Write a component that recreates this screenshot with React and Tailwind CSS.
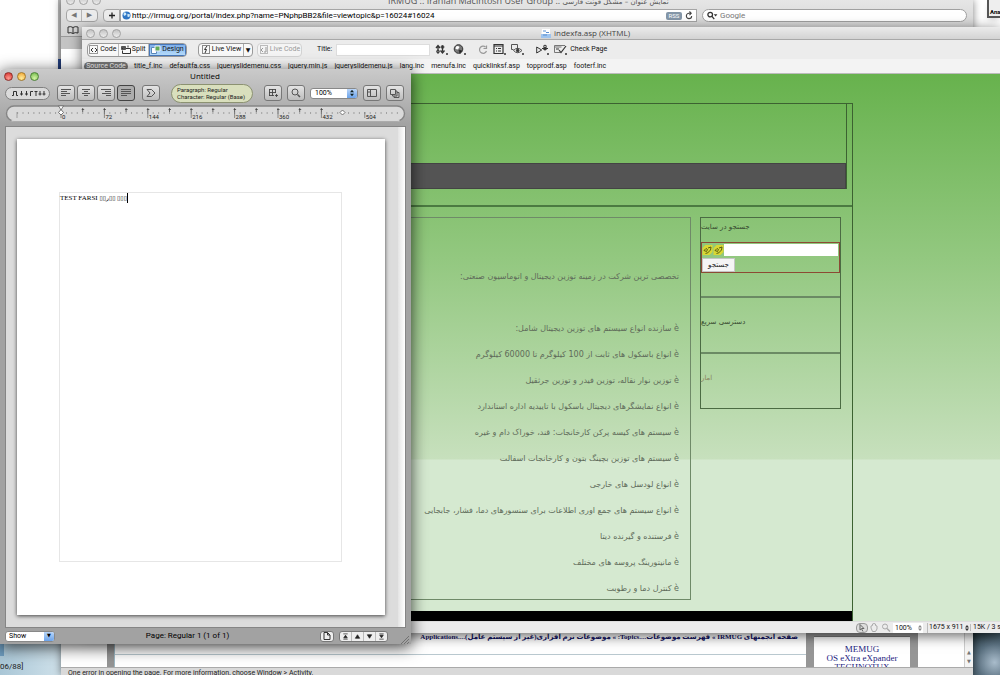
import React from "react";

const LATIN = "font-['Roboto','Noto_Sans','DejaVu_Sans',sans-serif]";

const relatedFiles = [
  "title_f.inc",
  "defaultfa.css",
  "jqueryslidemenu.css",
  "jquery.min.js",
  "jqueryslidemenu.js",
  "lang.inc",
  "menufa.inc",
  "quicklinksf.asp",
  "topprodf.asp",
  "footerf.inc",
];

const products = [
  "سازنده انواع سیستم های توزین دیجیتال شامل:",
  "انواع باسکول های ثابت از 100 کیلوگرم تا 60000 کیلوگرم",
  "توزین نوار نقاله، توزین فیدر و توزین جرثقیل",
  "انواع نمایشگرهای دیجیتال باسکول با تاییدیه اداره استاندارد",
  "سیستم های کیسه پرکن کارخانجات: قند، خوراک دام و غیره",
  "سیستم های توزین بچینگ بتون و کارخانجات اسفالت",
  "انواع لودسل های خارجی",
  "انواع سیستم های جمع اوری اطلاعات برای سنسورهای دما، فشار، جابجایی",
  "فرستنده و گیرنده دیتا",
  "مانیتورینگ پروسه های مختلف",
  "کنترل دما و رطوبت",
];

/* ---------- shared bits ---------- */

function GreyLights() {
  return (
    <div className="flex gap-1">
      {[0, 1, 2].map((i) => (
        <span
          key={i}
          className="h-[9px] w-[9px] rounded-full border border-[#a2a2a2] bg-gradient-to-b from-[#c4c4c4] to-[#ececec]"
        />
      ))}
    </div>
  );
}

function Icon({ className = "h-[10px] w-[12px]", children, viewBox = "0 0 12 10" }) {
  return (
    <svg viewBox={viewBox} className={`shrink-0 ${className}`} fill="none" stroke="#333" strokeWidth="1" aria-hidden="true">
      {children}
    </svg>
  );
}

/* ---------- browser window at the back ---------- */

function BrowserWindow() {
  return (
    <section className="absolute top-0 bottom-0 left-[61px] right-[27px] flex flex-col overflow-hidden bg-white shadow-[0_0_8px_rgba(0,0,0,0.5)]">
      <header className="bg-gradient-to-b from-[#e6e6e6] to-[#c9c9c9]">
        <div className="flex h-2 items-end px-[5px]">
          <div className="-mb-px -translate-y-1">
            <GreyLights />
          </div>
          <h2 dir="ltr" className="ml-[287px] whitespace-nowrap font-['Open_Sans',sans-serif] text-[9px] leading-[12px] text-[#555]">
            IRMUG :: Iranian Macintosh User Group ::{" "}
            <span dir="rtl" className="font-['DejaVu_Sans',sans-serif] text-[7px]">نمایش عنوان – مشکل فونت فارسی</span>
          </h2>
        </div>
        <div className="flex h-[15px] items-center pl-[5px] pr-[6px]">
          <div className="flex h-[13px] rounded-sm border border-[#a5a5a5] bg-[#ececec]">
            <button aria-label="Back" className="flex w-[15px] items-center justify-center border-r border-[#b5b5b5] text-[7px] text-[#777]">◀</button>
            <button aria-label="Forward" className="flex w-[15px] items-center justify-center text-[7px] text-[#777]">▶</button>
          </div>
          <button aria-label="Add bookmark" className="ml-[5px] h-[13px] w-[17px] rounded-l-sm border border-[#a5a5a5] bg-[#ececec]">
            <svg viewBox="0 0 15 11" className="h-[11px] w-[15px]" stroke="#222" strokeWidth="1.3" aria-hidden="true">
              <path d="M5 5.5h6M8 2.5v6" />
            </svg>
          </button>
          <div className="flex h-[13px] flex-1 items-center border border-[#a5a5a5] bg-white pl-px pr-[3px]">
            <svg viewBox="0 0 10 10" className="h-[9px] w-[9px]" aria-hidden="true">
              <circle cx="5" cy="5" r="4.5" fill="#2f76c6" />
              <path d="M2 1.500q3 0 3 2l-2 2q-2-1-1-4M6 3l3 1-1 3-2-1z" fill="#cfeafa" />
            </svg>
            <input
              aria-label="Address"
              className="min-w-0 flex-1 bg-transparent pl-px text-[8px] text-black outline-none"
              defaultValue="http://irmug.org/portal/index.php?name=PNphpBB2&file=viewtopic&p=16024#16024"
            />
            <button className="h-2 w-4 rounded-[2px] bg-[#8496a8] text-[6px] leading-[8px] text-white">RSS</button>
            <button aria-label="Reload" className="ml-[3px]">
              <svg viewBox="0 0 9 10" className="h-[9px] w-2" fill="none" stroke="#444" strokeWidth="1.2" aria-hidden="true">
                <path d="M7.5 5.5a3 3 0 1 1-3-3h2M5 .5l2 2-2 2" />
              </svg>
            </button>
          </div>
          <div className="ml-[5px] flex h-[13px] w-[265px] items-center rounded-full border border-[#a0a0a0] bg-white pl-[3px]">
            <Icon className="h-[9px] w-[12px]">
              <circle cx="4" cy="4" r="2.6" strokeWidth="1.4" />
              <path d="M6 6l2.5 3" strokeWidth="1.5" />
              <path d="M8 3.5h4l-2 2.5z" fill="#333" stroke="none" />
            </Icon>
            <input aria-label="Google search" placeholder="Google" className="min-w-0 flex-1 bg-transparent pl-[2px] text-[8px] outline-none placeholder:text-[#777]" />
          </div>
        </div>
        <div className="flex h-[14px] items-center border-b border-[#999] pl-[6px]">
          <Icon viewBox="0 0 12 8" className="h-2 w-3">
            <path d="M6 1.5Q4 0 1 1v6q3-1 5 .5Q8 6 11 7V1Q8 0 6 1.5v6" />
          </Icon>
          <Icon viewBox="0 0 10 8" className="ml-[7px] h-2 w-[10px]">
            <path d="M0 1.500h10M0 4h10M0 6.500h10" strokeDasharray="2 1" />
          </Icon>
        </div>
        <div className="h-3 bg-[#c4c4c4]" />
      </header>

      <div className="flex-1" />

      <main className="flex h-[44px] overflow-hidden">
        <div className="ml-[46px] w-[8px] shrink-0 border-r border-[#9db8c4] bg-[#949494]" />
        <div className="min-w-0 flex-1">
          <div dir="rtl" className="h-8 border-b border-[#b9c8cf] pr-[8px] pt-[5px]">
            <p className="whitespace-nowrap font-['Liberation_Serif','DejaVu_Sans',serif] text-[7px] font-bold leading-[18px] text-[#101060]">
              <a href="#index">صفحه انجمنهای IRMUG</a> »{" "}
              <a href="#topics">فهرست موضوعات....Topics:</a> »{" "}
              <a href="#apps">موضوعات نرم افزاری(غیر از سیستم عامل)....Applications</a>
            </p>
          </div>
        </div>
        <aside className="w-[112px] shrink-0 border-x-[8px] border-[#969696] bg-white text-center font-['Liberation_Serif',serif] text-[9px] leading-[9px] text-[#1c1c80]">
          <div className="h-[14px] border-b border-[#777] bg-[#969696]" />
          <div className="flex flex-col pt-[8px]">
            <a href="#memug">MEMUG</a>
            <a href="#osx">OS eXtra eXpander</a>
            <a href="#technotux">TECHNOTUX</a>
          </div>
        </aside>
        <div className="w-[46px] shrink-0" />
        <div className="flex w-[9px] shrink-0 flex-col items-center justify-end gap-[3px] border-l border-[#ccc] bg-[#f4f4f4] pb-[3px] text-[5px] leading-[6px] text-[#777]">
          <span>▲</span>
          <span>▼</span>
        </div>
      </main>
      <footer className="h-2 overflow-hidden border-t border-[#aaa] bg-[#d9d9d9] pl-[7px] text-[7px] leading-[10px] text-[#222]">
        One error in opening the page. For more information, choose Window &gt; Activity.
      </footer>
    </section>
  );
}

/* ---------- page editor window ---------- */

function EditorToolbar() {
  return (
    <div className="flex h-[19px] items-center bg-[#ececec] pl-[5px] text-[7px] text-[#111]">
      <div className="flex h-[14px] w-[100px] overflow-hidden rounded-[4px] border border-[#999] bg-[#f8f8f8]">
        <button className="flex flex-1 items-center justify-center gap-px border-r border-[#bbb]">
          <Icon className="h-[9px] w-[10px]" viewBox="0 0 10 9"><rect x=".5" y=".5" width="8" height="8" stroke="#999" /><path d="M4 3L2 5l2 2M6 3l2 2-2 2" /></Icon>
          Code
        </button>
        <button className="flex flex-1 items-center justify-center gap-px border-r border-[#bbb]">
          <Icon className="h-[9px] w-[10px]" viewBox="0 0 10 9"><path d="M.5 1.500h4v3h-4z" fill="#555" stroke="#555" /><path d="M5 3.500h4.500v5H1.500v-3M7 .5v2M2 3L1 4" /></Icon>
          Split
        </button>
        <button className="flex w-[37px] items-center justify-center gap-px border border-[#4777b9] bg-gradient-to-b from-[#7fb0ea] to-[#b6dcfb]">
          <Icon className="h-[9px] w-[10px]" viewBox="0 0 10 9"><path d="M.5 2.500h5v6h-5z" fill="#fff" stroke="#5a88bb" /><path d="M4 1h5v5H4z" fill="#62ad57" stroke="#eef" /></Icon>
          Design
        </button>
      </div>
      <div className="ml-[11px] flex h-[14px] w-[55px] overflow-hidden rounded-[4px] border border-[#999] bg-[#f8f8f8]">
        <button className="flex flex-1 items-center justify-center gap-px">
          <Icon className="h-[9px] w-[10px]" viewBox="0 0 10 9"><rect x="1.500" y=".5" width="7" height="8" stroke="#888" /><path d="M6 1L3.500 4.500h2L4 8" /></Icon>
          Live View
        </button>
        <button aria-label="Live View options" className="w-[9px] border-l border-[#aaa] text-[6px]">▼</button>
      </div>
      <button className="ml-[4px] flex h-[14px] w-[45px] items-center justify-center gap-px rounded-[4px] border border-[#d2d2d2] bg-[#f4f4f4] text-[#999]">
        <Icon className="h-[9px] w-[10px]" viewBox="0 0 10 9"><rect x="1.500" y=".5" width="7" height="8" stroke="#bbb" /><path d="M4 3L2 5l2 2M7 2v5H5" stroke="#999" /></Icon>
        Live Code
      </button>
      <label className="ml-[15px] flex items-center gap-[4px]">
        Title:
        <input className="h-[12px] w-[94px] border border-[#ddd] bg-white px-1 outline-none" />
      </label>
      <div className="ml-[5px] flex items-center">
        <button aria-label="File management"><Icon className="h-[11px] w-[13px]" viewBox="0 0 13 11"><path d="M3 9.500V3M1 4l2-2.500L5 4M7.500 1.500v6M5.500 6.500L7.500 9 9.500 6.500" strokeWidth="1.300" /><circle cx="3" cy="7.500" r="1.400" /><circle cx="7.500" cy="3" r="1.400" /><path d="M11 10h2" strokeWidth="1.500" /></Icon></button>
        <button aria-label="Preview in browser" className="ml-[5px]"><Icon className="h-[11px] w-[13px]" viewBox="0 0 13 11"><circle cx="5.500" cy="5" r="4.300" fill="#777" /><path d="M3 2.500q2-1 3.500.5L5 5.500 2.500 5z" fill="#fff" stroke="none" /><path d="M6 6l3 1-2 2.500z" fill="#222" /><path d="M11 10h2" strokeWidth="1.500" /></Icon></button>
        <button aria-label="Refresh" className="ml-[12px]"><Icon className="h-[10px] w-[10px]" viewBox="0 0 10 10"><path d="M8.500 6a3.600 3.600 0 1 1-1-4M8.500.5v3h-3" stroke="#999" strokeWidth="1.200" /></Icon></button>
        <button aria-label="View options" className="ml-[5px]"><Icon className="h-[11px] w-[13px]" viewBox="0 0 13 11"><path d="M1 .5h9v9H1zM1 2h9" strokeWidth="1.200" /><path d="M3 4.500h1M5 4.500h3M3 7h1M5 7h3" /><path d="M11 10h2" strokeWidth="1.500" /></Icon></button>
        <button aria-label="Visual aids" className="ml-[5px]"><Icon className="h-[11px] w-[13px]" viewBox="0 0 13 11"><path d="M.5.5h6v5M.5.500v5h2M2.500 6.500Q6.500 2 11 6.500 6.500 11 2.500 6.500z" stroke="#555" /><circle cx="6.700" cy="6.500" r="1.300" fill="#333" /><path d="M11 10h2" strokeWidth="1.500" /></Icon></button>
        <button aria-label="Validate" className="ml-[12px]"><Icon className="h-[11px] w-[13px]" viewBox="0 0 13 11"><path d="M.7 3v6l5-3zM6 4.500h6M7 2.500l2-1.500 2 1.500" /><circle cx="9" cy="4.500" r="1.500" fill="#333" /><path d="M11 10h2" strokeWidth="1.500" /></Icon></button>
        <button className="ml-[5px] flex items-center gap-[3px]">
          <Icon className="h-[11px] w-[13px]" viewBox="0 0 13 11"><path d="M11 1.500H.5v7h6M.5 3h7" stroke="#777" /><path d="M5 6l2 2.500L12 2M2 5h3" strokeWidth="1.200" /><path d="M11 10h2" strokeWidth="1.500" /></Icon>
          Check Page
        </button>
      </div>
    </div>
  );
}

function DesignCanvas() {
  return (
    <main
      dir="ltr"
      className="bg-[#d5e9d0] bg-[linear-gradient(to_bottom,#67b24d_0,#93c880_185px,#c7e0bd_385px,#d5e9d0_386px)] pt-[29px] font-['DejaVu_Sans',sans-serif]"
    >
      <div className="mr-[147px] border-t border-r border-[#3c6231]">
        <div className="mr-[5px] border-r border-[#3c6231] pt-[59px]">
          <div className="h-[26px] border border-[#444] bg-[#545454]" />
        </div>
        <div className="mt-4 flex items-start border-t-2 border-[#4b7a41] pt-[10px] pr-[11px]">
          <article dir="rtl" className="min-w-0 flex-1 border border-[#6f8a68] pt-[49px] pr-[11px] text-[8px] leading-[20px] text-[#5f6b5a]">
            <p className="mb-8">تخصصی ترین شرکت در زمینه توزین دیجیتال و اتوماسیون صنعتی:</p>
            <ul className="flex flex-col gap-[6px]">
              {products.map((p) => (
                <li key={p} className="whitespace-nowrap">
                  <span dir="ltr">è</span> {p}
                </li>
              ))}
            </ul>
          </article>
          <aside className="ml-[9px] w-[141px] border border-[#4b6b43] text-[7px] text-[#36492f]">
            <h3 className="pt-[2px] leading-[14px]">جستجو در سایت</h3>
            <form className="mt-2 h-[31px] border border-[#8c4a34]" onSubmit={(e) => e.preventDefault()}>
              <div className="flex h-[14px] items-center">
                {[0, 1].map((i) => (
                  <svg key={i} viewBox="0 0 10 10" className="h-[10px] w-[11px] shrink-0" aria-hidden="true">
                    <path d="M0 3l3-3h7v7l-3 3H0z" fill="#d9d733" />
                    <path d="M1.500 5.500l2-2 1.500 1-1 2zM5.500 3l3-1-.5 3-2 2M3 8.500l3-1" fill="none" stroke="#4a5210" strokeWidth=".9" />
                  </svg>
                ))}
                <input aria-label="جستجو در سایت" className="mr-px h-[12px] min-w-0 flex-1 bg-white" />
              </div>
              <button className="mt-px h-[14px] w-[33px] border border-[#c5c5c5] bg-[#f5f5f5] text-[7px] leading-[12px] text-[#222]">جستجو</button>
            </form>
            <h3 className="mt-[23px] border-t-2 border-[#6b8a64] pt-[17px] leading-[14px]">دسترسی سریع</h3>
            <h3 className="mt-[23px] h-[56px] border-t-2 border-[#6b8a64] pt-[17px] leading-[14px] text-[#8a8460]">امار</h3>
          </aside>
        </div>
        <div className="mt-[11px] h-[10px] bg-black" />
      </div>
    </main>
  );
}

function PageEditorWindow() {
  return (
    <section className="absolute left-[82px] right-0 top-[27px] shadow-[0_3px_12px_rgba(0,0,0,0.6)]">
      <header className="flex h-[13px] items-center border-b border-[#a8a8a8] bg-gradient-to-b from-[#ebebeb] to-[#d3d3d3] pl-1">
        <GreyLights />
        <h2 className="flex flex-1 items-center justify-center gap-[3px] pl-[50px] font-['Open_Sans',sans-serif] text-[8px] leading-none text-[#444]">
          <svg viewBox="0 0 10 9" className="h-[9px] w-[10px]" aria-hidden="true">
            <path d="M1 0h8v9H0z" fill="#fff" />
            <path d="M0 5h10v4H0z" fill="#9fc4ee" />
            <path d="M2 2h3M5 3.500h3M2 6h4" stroke="#5b8fd0" />
          </svg>
          indexfa.asp (XHTML)
        </h2>
      </header>
      <EditorToolbar />
      <nav className="flex h-[15px] items-center gap-[7px] border-b border-[#bbb] bg-[#f3f3f3] pl-[2px] text-[7px] leading-none text-[#111]">
        <a href="#source" className="mr-[-1px] flex h-[9px] w-[44px] items-center justify-center rounded-full bg-[#777] text-white">Source Code</a>
        {relatedFiles.map((f) => (
          <a key={f} href={`#${f}`}>{f}</a>
        ))}
      </nav>
      <DesignCanvas />
      <footer className="flex h-[12px] items-center justify-end overflow-hidden whitespace-nowrap border-t border-[#ddd] bg-[#ececec] text-[7px] leading-none text-[#111]">
        <button aria-label="Select tool" className="flex h-[10px] w-[12px] items-center justify-center rounded-sm border border-[#999] bg-[#ddd]"><Icon className="h-2 w-2" viewBox="0 0 8 8"><path d="M2 .5v5.500l1.500-1.200L5 7.500M2 .5l4 4H3.500" stroke="#666" /></Icon></button>
        <button aria-label="Hand tool"><Icon className="h-[9px] w-[12px]" viewBox="0 0 12 9"><path d="M3 5V3l1.500-.5V1L6 .5 7.500 1v1.500L9 3v3L7.500 8.500h-3z" stroke="#aaa" /></Icon></button>
        <button aria-label="Zoom tool"><Icon className="h-[9px] w-[12px]" viewBox="0 0 12 9"><circle cx="5" cy="3.500" r="2.500" stroke="#aaa" /><path d="M7 5.500L10 8.500" stroke="#aaa" strokeWidth="1.500" /></Icon></button>
        <div className="ml-px flex h-[10px] w-[30px] items-center bg-white">
          <select aria-label="Zoom" className="min-w-0 flex-1 appearance-none bg-transparent pl-[2px] text-[7px] leading-[10px]"><option>100%</option></select>
          <svg viewBox="0 0 4 6" className="mr-px h-[6px] w-1" fill="#888" aria-hidden="true"><path d="M0 2.500L2 0l2 2.500zM0 3.500L2 6l2-2.500z" /></svg>
        </div>
        <button className="ml-[4px] flex h-[10px] w-[43px] items-center gap-[2px] border-l border-[#bbb] pl-px">
          1675 x 911
          <svg viewBox="0 0 4 6" className="h-[6px] w-1" fill="#333" aria-hidden="true"><path d="M0 2.500L2 0l2 2.500zM0 3.500L2 6l2-2.500z" /></svg>
        </button>
        <span className="w-[30px] border-l border-[#bbb] pl-[2px]">15K / 3 s</span>
      </footer>
    </section>
  );
}

/* ---------- word processor window in front ---------- */

const BTN =
  "flex h-[16px] w-[18px] shrink-0 items-center justify-center rounded-[3px] border border-[#777] bg-gradient-to-b from-[#e4e4e4] to-[#bdbdbd]";

function AlignIcon({ rows }) {
  return (
    <svg viewBox="0 0 12 10" className="h-[10px] w-[12px]" stroke="#555" strokeWidth="1" aria-hidden="true">
      {rows.map(([a, b], i) => (
        <path key={i} d={`M${a} ${1.5 + i * 2}H${b}`} />
      ))}
    </svg>
  );
}

function Ruler() {
  const step = 43.4;
  const zero = 55.5;
  const ticks = [];
  for (let i = -10; i < 70; i++) {
    const x = zero + (i * step) / 8;
    if (x > 8 && x < 393) ticks.push(x);
  }
  return (
    <svg viewBox="0 0 400 17" className="block h-[17px] w-full" aria-label="Ruler">
      <rect x="1" y="1" width="398" height="15" rx="7.5" fill="#d9d9d9" stroke="#858585" strokeWidth="1.4" />
      <path d="M6 15.800h388" stroke="#f4f4f4" />
      {ticks.map((x) => (
        <path key={x} d={`M${x} 7v2`} stroke="#888" strokeWidth=".7" />
      ))}
      <path d="M11.500 7v6" stroke="#888" strokeWidth=".7" />
      {[0, 1, 2, 3, 4, 5, 6, 7].map((n) => (
        <g key={n}>
          <path d={`M${zero + n * step} 7v6`} stroke="#666" strokeWidth=".7" />
          <text x={zero + n * step + 1} y="14" fontSize="6" fill="#222">
            {n * 72}
          </text>
        </g>
      ))}
      {Array.from({ length: 12 }, (_, i) => zero + ((i + 1) * step) / 2).map((x) => (
        <path key={x} d={`M${x} 3v4M${x - 1} 4.500h2.500`} stroke="#444" strokeWidth=".8" />
      ))}
      <path d="M53 .8h5L55.500 5z" fill="#fff" stroke="#555" strokeWidth=".7" />
      <path d="M55.500 4.500L58 7.500 55.500 10 53 7.500zM337 5l2.500 2.500L337 10l-2.500-2.500z" fill="#fff" stroke="#555" strokeWidth=".8" />
    </svg>
  );
}

function WriterWindow() {
  return (
    <section className="absolute left-0 top-[69px] w-[411px] rounded-t-[4px] bg-[linear-gradient(to_bottom,#cacaca_0,#a2a2a2_56px)] shadow-[0_3px_16px_rgba(0,0,0,0.75)]">
      <header className="flex h-[14px] items-center pl-1">
        <div className="flex gap-1">
          <span className="h-[9px] w-[9px] rounded-full border border-[#8e2f2b] bg-[radial-gradient(circle_at_50%_75%,#ff9b90,#d42a26)]" />
          <span className="h-[9px] w-[9px] rounded-full border border-[#a37a2c] bg-[radial-gradient(circle_at_50%_75%,#ffec9a,#f0a02c)]" />
          <span className="h-[9px] w-[9px] rounded-full border border-[#4e8338] bg-[radial-gradient(circle_at_50%_75%,#d5f5a4,#6bb545)]" />
        </div>
        <h1 className="flex-1 pr-[40px] text-center font-['Open_Sans',sans-serif] text-[8px] leading-[14px] text-black">Untitled</h1>
      </header>

      <div className="flex h-[20px] items-center pl-[5px] pr-[7px]">
        <button aria-label="Tab stops" className="flex h-[13px] w-[45px] items-center justify-center rounded-full border border-[#808080] bg-[#dadada]">
          <svg viewBox="0 0 36 8" className="h-2 w-9" fill="none" stroke="#333" strokeWidth="1" aria-hidden="true">
            <path d="M2 6.500h1.500v-4h3v4H8M11.500 2v4.500M10 5h3M16.500 2v4.500M15 5h3M20.500 7V2.500h2.500M26 7V2.500M24.500 2.500h3M30 2v4.500M28.500 5h3M34 2v4.500M32.500 5h3" />
          </svg>
        </button>
        <div className="ml-[7px] flex gap-[2px]">
          <button aria-label="Align left" className={BTN}><AlignIcon rows={[[1, 11], [1, 7], [1, 10], [1, 6]]} /></button>
          <button aria-label="Align centre" className={BTN}><AlignIcon rows={[[2, 10], [4, 8], [2, 10], [4, 8]]} /></button>
          <button aria-label="Align right" className={BTN}><AlignIcon rows={[[1, 11], [5, 11], [2, 11], [6, 11]]} /></button>
          <button aria-label="Justify" className="flex h-[16px] w-[18px] items-center justify-center rounded-[3px] border border-[#444] bg-[#adadad]"><AlignIcon rows={[[1, 11], [1, 11], [1, 11], [1, 7]]} /></button>
        </div>
        <button aria-label="Style marker" className={`ml-[7px] ${BTN}`}>
          <Icon><path d="M2 1.500h4.500L10 5 6.500 8.500H2L5 5z" stroke="#555" /></Icon>
        </button>
        <div className="ml-[11px] flex h-[19px] w-[82px] flex-col justify-center rounded-full border border-[#8c9272] bg-[#d9dfbd] pl-[5px] text-[6px] leading-[7px] text-[#222]">
          <span className="whitespace-nowrap">Paragraph: Regular</span>
          <span className="whitespace-nowrap">Character: Regular (Base)</span>
        </div>
        <div className="ml-auto flex items-center gap-[5px]">
          <button aria-label="Table" className={BTN}><Icon><path d="M2 1.500h7M2 4.500h7M2 7.500h5M2.500 1v7M5.500 1v7M8.500 1v4M9.500 6v3M8 7.500h3" stroke="#444" strokeWidth=".9" /></Icon></button>
          <button aria-label="Search" className={BTN}><Icon><circle cx="5" cy="4" r="3" stroke="#555" /><path d="M7.500 6.500L10 9" stroke="#555" strokeWidth="1.500" /></Icon></button>
          <div className="flex h-[11px] w-[48px] items-center overflow-hidden rounded-[3px] border border-[#888] bg-white">
            <select aria-label="Zoom level" className="min-w-0 flex-1 appearance-none bg-transparent pl-1 text-[7px] leading-[9px] text-black outline-none"><option>100%</option></select>
            <span className="flex h-full w-[10px] items-center justify-center bg-gradient-to-b from-[#b9d5f8] to-[#6ba3ea]">
              <svg viewBox="0 0 6 8" className="h-2 w-[6px]" aria-hidden="true"><path d="M1 3.300l2-2.500 2 2.500zM1 4.700l2 2.500 2-2.500z" fill="#122" /></svg>
            </span>
          </div>
          <button aria-label="Sidebar" className={BTN}><Icon><path d="M1.500 1.500h9v7h-9zM4.500 1.500v7M2 4h2" stroke="#555" /></Icon></button>
          <button aria-label="Windows" className={BTN}><Icon><path d="M1.500 1.500h5v5h-5zM6.500 3H8v5H3.500V6.500M8 4.500h2v5H5V8" stroke="#555" /></Icon></button>
        </div>
      </div>

      <div className="px-[5px] pt-[2px] pb-[4px]">
        <Ruler />
      </div>

      <div className="mx-[5px] flex border border-[#858585] bg-[#dcdcdc]">
        <div className="flex-1 pt-[12px] pb-[12px] pl-[11px] pr-[13px]">
          <div className="bg-white pt-[53px] pb-[53px] pl-[42px] pr-[43px] shadow-[0_1px_4px_rgba(0,0,0,0.7)]">
            <div className="h-[370px] border border-[#e6e6e6] font-['Liberation_Serif','DejaVu_Sans',serif] text-[7px] leading-[8px] text-black">
              TEST FARSI <span dir="ltr" className="text-[6px]">▯▯ر▯▯ ▯▯▯</span>
              <span className="inline-block h-[10px] w-px bg-black align-middle" />
            </div>
          </div>
        </div>
        <div className="w-[7px] bg-gradient-to-r from-[#e4e4e4] to-white" />
      </div>

      <footer className="flex h-[16px] items-center pl-[5px] pr-[2px] text-[8px] text-black">
        <div className="flex h-[11px] w-[50px] items-center overflow-hidden rounded-[3px] border border-[#888] bg-white">
          <select aria-label="Show" className="min-w-0 flex-1 appearance-none bg-transparent pl-[3px] text-[7px] leading-[9px] outline-none"><option>Show</option></select>
          <span className="flex h-full w-[10px] items-center justify-center bg-gradient-to-b from-[#b9d5f8] to-[#6ba3ea] text-[5px]">▼</span>
        </div>
        <p className="flex-1 text-center leading-none">Page: Regular 1 (1 of 1)</p>
        <button aria-label="New page" className="flex h-[11px] w-[14px] items-center justify-center rounded-[3px] border border-[#777] bg-[#eee]">
          <Icon viewBox="0 0 8 8" className="h-2 w-2"><path d="M1 .5h3.500L7 3v4.500H1zM4.500.5V3H7" /></Icon>
        </button>
        <div className="ml-[5px] mr-[13px] flex h-[11px] w-[49px] rounded-[3px] border border-[#777] bg-[#eee]">
          {[
            ["First page", "M1.500 1h5M4 2.500L6 5.500h-4zM1.500 7h5"],
            ["Previous page", "M4 2L6.500 6h-5z"],
            ["Next page", "M4 6L6.500 2h-5z"],
            ["Last page", "M1.500 1h5M4 5.500L6 2.500h-4zM1.500 7h5"],
          ].map(([label, d]) => (
            <button key={label} aria-label={label} className="flex flex-1 items-center justify-center border-r border-[#bbb] last:border-r-0">
              <svg viewBox="0 0 8 8" className="h-[7px] w-[7px]" fill="#222" stroke="#222" strokeWidth=".8" aria-hidden="true"><path d={d} /></svg>
            </button>
          ))}
        </div>
        <svg viewBox="0 0 8 8" className="h-2 w-2 self-end" stroke="#666" strokeWidth=".8" aria-hidden="true">
          <path d="M0 8L8 0M3 8l5-5M6 8l2-2" />
        </svg>
      </footer>
    </section>
  );
}

export default function App() {
  return (
    <div className={`relative h-screen overflow-hidden bg-white ${LATIN}`}>
      <div className="flex h-full flex-col justify-between">
        <div className="flex justify-between">
          <div className="ml-[58px] flex h-[75px] w-[3px] flex-col justify-end bg-[#b9b9b9]">
            <div className="h-4 bg-[#27458c]" />
          </div>
          <div className="h-[18px] w-[13px] overflow-hidden border-b-2 border-l-2 border-[#555] bg-[#eee] pl-px pt-[7px] text-[6px] font-bold leading-[9px] shadow-md">Ana</div>
        </div>
        <div className="flex h-[42px] items-end justify-between">
          <div className="flex h-full w-[61px] flex-col justify-between overflow-hidden bg-gradient-to-r from-[#a9c6d6] to-[#cfe1ea] pb-[2px] text-[8px] leading-[12px] text-[#222]">
            <div className="h-[23px] w-1 bg-[#6d9bbd]" />
            <span>06/88]</span>
          </div>
          <div className="h-full w-[27px] bg-[radial-gradient(circle_at_80%_70%,#a9bccb,#5a7080_50%,#22353c)]" />
        </div>
      </div>
      <BrowserWindow />
      <PageEditorWindow />
      <WriterWindow />
    </div>
  );
}
